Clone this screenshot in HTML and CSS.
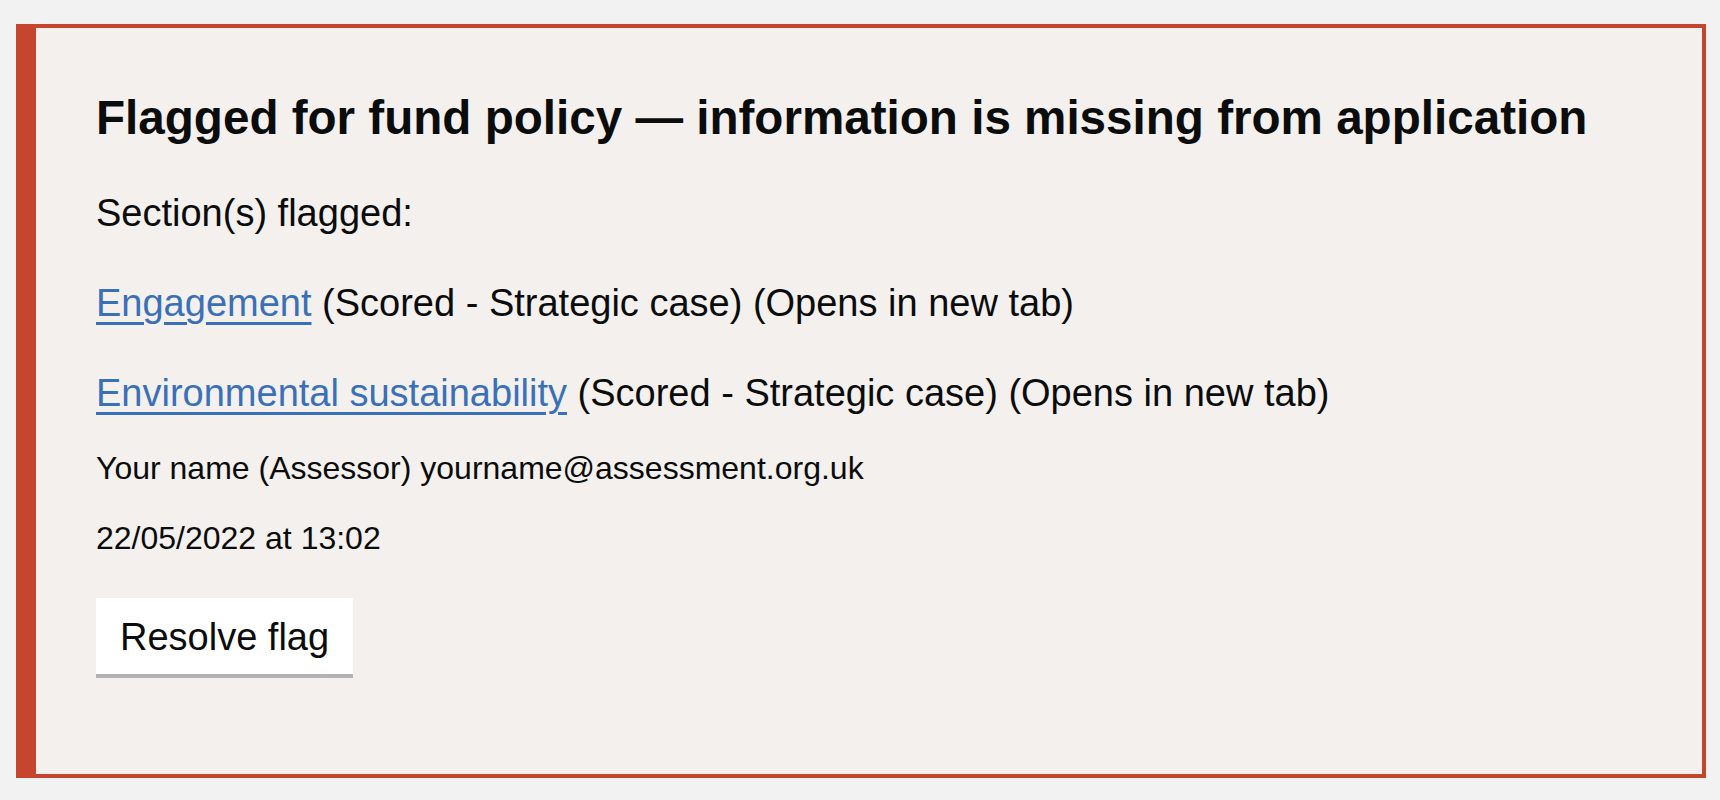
FILE: index.html
```html
<!DOCTYPE html>
<html lang="en">
<head>
<meta charset="utf-8">
<title>Flagged for fund policy</title>
<link rel="stylesheet" href="styles.css">
</head>
<body>
<div class="page">
  <div class="flag-banner">
    <h2 class="flag-title">Flagged for fund policy — information is missing from application</h2>
    <p class="body">Section(s) flagged:</p>
    <p class="body"><a class="link" href="#">Engagement</a> (Scored - Strategic case) (Opens in new tab)</p>
    <p class="body body-last"><a class="link" href="#">Environmental sustainability</a> (Scored - Strategic case) (Opens in new tab)</p>
    <p class="small">Your name (Assessor) yourname@assessment.org.uk</p>
    <p class="small small-last">22/05/2022 at 13:02</p>
    <button class="button" type="button">Resolve flag</button>
  </div>
</div>
</body>
</html>
```

FILE: styles.css
```css
html, body {
  margin: 0;
  padding: 0;
}

body {
  background: #f2f2f2;
  font-family: "Liberation Sans", Arial, Helvetica, sans-serif;
  color: #0b0c0c;
}

.page {
  padding: 24px 14px 22px 16px;
}

.flag-banner {
  box-sizing: border-box;
  height: 754px;
  background: #f4f0ee;
  border: 4px solid #c6452e;
  border-left-width: 20px;
  padding: 60px 60px 0 60px;
}

.flag-title {
  margin: 0 0 40px;
  font-size: 47.6px;
  line-height: 60px;
  font-weight: 700;
}

.body {
  margin: 0 0 40px;
  font-size: 38px;
  line-height: 50px;
}

.body-last {
  margin-bottom: 30px;
}

.small {
  margin: 0 0 30px;
  font-size: 32px;
  line-height: 40px;
}

.small-last {
  margin-bottom: 40px;
}

.link {
  color: #3a70b9;
  text-decoration: underline;
  text-decoration-thickness: 3px;
  text-underline-offset: 6px;
}

.button {
  display: block;
  margin: 0;
  font-family: inherit;
  font-size: 38px;
  line-height: 1;
  color: #0b0c0c;
  background: #ffffff;
  border: 4px solid transparent;
  border-radius: 0;
  padding: 16px 20px 14px;
  box-shadow: 0 4px 0 #b3b3b5;
  cursor: pointer;
}
```
